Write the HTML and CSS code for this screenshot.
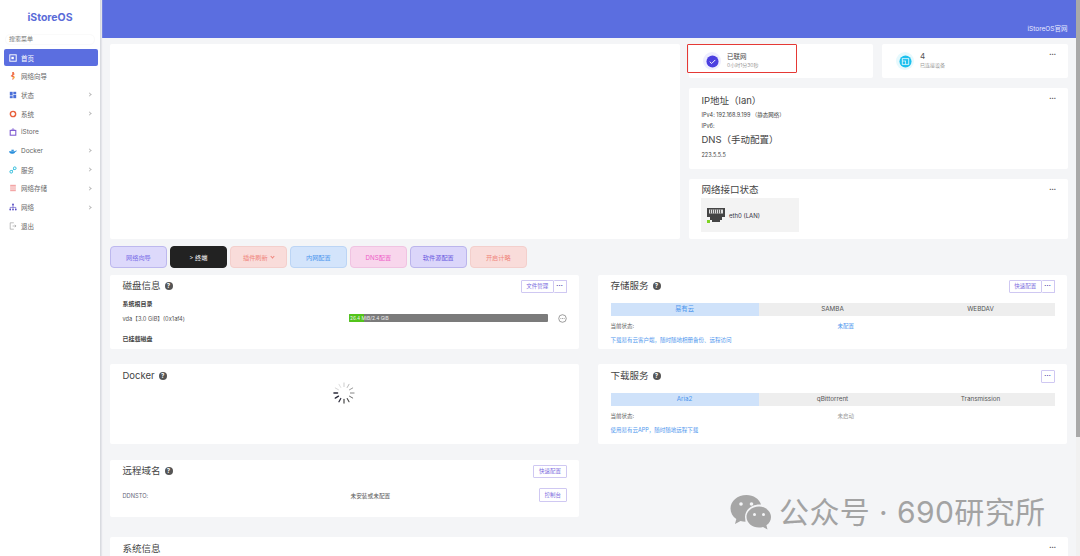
FILE: index.html
```html
<!DOCTYPE html>
<html lang="zh-CN">
<head>
<meta charset="utf-8">
<title>iStoreOS</title>
<link rel="stylesheet" href="styles.css">
</head>
<body>
<div class="app">
  <aside class="sidebar">
    <div class="logo">iStoreOS</div>
    <div class="search">搜索菜单</div>
    <nav class="menu">
      <a class="item active"><svg class="ic" viewBox="0 0 10 10"><rect x="1" y="1" width="8" height="8" fill="none" stroke="#fff" stroke-width="1.2"/><rect x="3" y="3.5" width="3" height="3" fill="#fff"/></svg><span>首页</span></a>
      <a class="item"><svg class="ic" viewBox="0 0 10 10"><path d="M4 0h2l1 3-2 1 2 2-2 4-1-1 1-2-3-2 2-2z" fill="#f0704a"/><circle cx="6" cy="7" r="1.2" fill="#f6b73c"/></svg><span>网络向导</span></a>
      <a class="item"><svg class="ic" viewBox="0 0 10 10"><rect x="1" y="1" width="3.6" height="4.6" fill="#4a6fd8"/><rect x="5.4" y="1" width="3.6" height="2.8" fill="#4a6fd8"/><rect x="1" y="6.4" width="3.6" height="2.6" fill="#4a6fd8"/><rect x="5.4" y="4.6" width="3.6" height="4.4" fill="#4a6fd8"/></svg><span>状态</span><i class="chev"></i></a>
      <a class="item"><svg class="ic" viewBox="0 0 10 10"><circle cx="5" cy="5" r="3.3" fill="none" stroke="#e8603c" stroke-width="1.8"/></svg><span>系统</span><i class="chev"></i></a>
      <a class="item"><svg class="ic" viewBox="0 0 10 10"><rect x="1.5" y="3" width="7" height="6" fill="none" stroke="#7a55d0" stroke-width="1.3"/><path d="M3.5 3a1.5 2 0 0 1 3 0" fill="none" stroke="#7a55d0"/></svg><span>iStore</span></a>
      <a class="item"><svg class="ic" viewBox="0 0 10 10"><path d="M0 5.4h7.6c.4-1 1.2-1.2 2.2-1-.3 1-1 1.6-2 1.8C7 8 5.4 8.5 3.5 8.5 1.5 8.5.3 7.2 0 5.4z" fill="#2a8fdc"/><rect x="3" y="3.4" width="3" height="1.5" fill="#2a8fdc"/></svg><span>Docker</span><i class="chev"></i></a>
      <a class="item"><svg class="ic" viewBox="0 0 10 10"><circle cx="2.8" cy="7.2" r="1.7" fill="none" stroke="#1fb6d8" stroke-width="1.1"/><circle cx="7.2" cy="2.8" r="1.7" fill="none" stroke="#1fb6d8" stroke-width="1.1"/><path d="M4 6l2-2" stroke="#1fb6d8"/></svg><span>服务</span><i class="chev"></i></a>
      <a class="item"><svg class="ic" viewBox="0 0 10 10"><rect x="1.5" y="1" width="7" height="8" fill="#f3a6a6"/><path d="M1.5 3.8h7M1.5 6.3h7" stroke="#fff"/></svg><span>网络存储</span><i class="chev"></i></a>
      <a class="item"><svg class="ic" viewBox="0 0 10 10"><path d="M5 2.5v3M1.5 8V5.5h7V8M5 5.5V8" fill="none" stroke="#5b4fc4" stroke-width=".8"/><circle cx="5" cy="1.8" r="1.2" fill="#5b4fc4"/><circle cx="1.5" cy="8.2" r="1.1" fill="#5b4fc4"/><circle cx="5" cy="8.2" r="1.1" fill="#5b4fc4"/><circle cx="8.5" cy="8.2" r="1.1" fill="#5b4fc4"/></svg><span>网络</span><i class="chev"></i></a>
      <a class="item"><svg class="ic" viewBox="0 0 10 10"><path d="M6 1H1.5v8H6M4.5 5h4.3M7.3 3.5l1.500 1.500-1.500 1.500" fill="none" stroke="#9a9a9a" stroke-width=".8"/></svg><span>退出</span></a>
    </nav>
  </aside>

  <div class="main">
    <header class="topbar"><span>iStoreOS官网</span></header>
    <div class="content">
      <section class="top">
        <div class="card blank"></div>
        <div class="side">
          <div class="stats">
            <div class="card stat first">
              <span class="halo violet"><svg viewBox="0 0 14 14" class="disc"><circle cx="7" cy="7" r="6.5" fill="#4b3fe0"/><path d="M4 7.2l2.1 2L10 5.3" fill="none" stroke="#fff" stroke-width="1"/></svg></span>
              <div class="stat-text"><b>已联网</b><small>0小时1分30秒</small></div>
            </div>
            <div class="card stat second">
              <span class="halo cyan"><svg viewBox="0 0 14 14" class="disc"><circle cx="7" cy="7" r="6.5" fill="#1cc0ee"/><rect x="3.5" y="4" width="7" height="6" fill="none" stroke="#fff" stroke-width=".8"/><path d="M3.5 6.5h4M7 6.5V10" stroke="#fff" stroke-width=".7"/></svg></span>
              <div class="stat-text"><b class="num">4</b><small>已连接设备</small></div>
              <span class="more">···</span>
            </div>
          </div>
          <div class="card ipcard">
            <span class="more">···</span>
            <h3>IP地址（lan）</h3>
            <p>IPv4: 192.168.9.199 （静态网络）</p>
            <p>IPv6:</p>
            <h3 class="dns">DNS（手动配置）</h3>
            <p class="dnsval">223.5.5.5</p>
          </div>
          <div class="card netcard">
            <span class="more">···</span>
            <h3>网络接口状态</h3>
            <div class="port">
              <svg class="rj" viewBox="0 0 18 15"><path d="M0 0h18v9h-3v3h-2v2H5v-2H3V9H0z" fill="#444"/><path d="M2 1.5h14v4H2z" fill="#ddd"/><path d="M3.5 1.5v4M5.5 1.5v4M7.5 1.5v4M9.5 1.5v4M11.5 1.5v4M13.5 1.5v4" stroke="#444" stroke-width=".8"/><rect x="0" y="12" width="3" height="3" fill="#7ed321"/></svg>
              <span>eth0 (LAN)</span>
            </div>
          </div>
        </div>
      </section>

      <div class="actions">
        <a class="act a1">网络向导</a>
        <a class="act a2">&gt; 终端</a>
        <a class="act a3">插件刷新<i class="caret"></i></a>
        <a class="act a4">内网配置</a>
        <a class="act a5">DNS配置</a>
        <a class="act a6">软件源配置</a>
        <a class="act a7">开启计略</a>
      </div>

      <div class="cols">
        <div class="col">
          <section class="card panel disk">
            <div class="phead"><h2>磁盘信息 <i class="q">?</i></h2><div class="btns"><a class="btn">文件管理</a><a class="btn dots">•••</a></div></div>
            <div class="label">系统根目录</div>
            <div class="diskrow">
              <span class="dname">vda【3.0 GiB】(0x1af4)</span>
              <div class="bar"><div class="fill"></div><span>26.4 MiB/2.4 GiB</span></div>
              <svg class="ellip" viewBox="0 0 10 10"><circle cx="5" cy="5" r="4.2" fill="none" stroke="#666" stroke-width=".7"/><path d="M2.8 5h.8M4.6 5h.8M6.4 5h.8" stroke="#555" stroke-width=".8"/></svg>
            </div>
            <div class="label mounted">已挂载磁盘</div>
          </section>
          <section class="card panel docker">
            <h2>Docker <i class="q">?</i></h2>
            <svg class="spin" viewBox="0 0 24 24">
              <g stroke-linecap="round" stroke-width="1">
                <path d="M12 1v4" stroke="#c8c8c8"/><path d="M17.5 2.5l-2 3.5" stroke="#b0b0b0"/><path d="M21.5 6.5L18 8.5" stroke="#909090"/><path d="M23 12h-4" stroke="#787878"/><path d="M21.5 17.5l-3.5-2" stroke="#606060"/><path d="M17.5 21.5l-2-3.5" stroke="#484848" stroke-width="1.2"/><path d="M12 23v-4" stroke="#383838" stroke-width="1.2"/><path d="M6.5 21.5l2-3.5" stroke="#303040" stroke-width="1.4"/><path d="M2.5 17.5l3.5-2" stroke="#282838" stroke-width="1.5"/><path d="M1 12h4" stroke="#282838" stroke-width="1.5"/><path d="M2.5 6.5L6 8.5" stroke="#d0d0d0"/><path d="M6.5 2.5l2 3.5" stroke="#dcdcdc"/>
              </g>
            </svg>
          </section>
          <section class="card panel remote">
            <div class="phead"><h2>远程域名 <i class="q">?</i></h2><div class="btns"><a class="btn">快速配置</a></div></div>
            <div class="rrow"><span class="rl">DDNSTO:</span><span class="rv">未安装或未配置</span><a class="btn tall">控制台</a></div>
          </section>
        </div>
        <div class="col">
          <section class="card panel store">
            <div class="phead"><h2>存储服务 <i class="q">?</i></h2><div class="btns"><a class="btn">快速配置</a><a class="btn dots">•••</a></div></div>
            <div class="tabs"><a class="on">易有云</a><a>SAMBA</a><a>WEBDAV</a></div>
            <div class="state"><span>当前状态:</span><span class="sv blue">未配置</span></div>
            <a class="link">下载易有云客户端，随时随地相册备份、远程访问</a>
          </section>
          <section class="card panel down">
            <div class="phead"><h2>下载服务 <i class="q">?</i></h2><div class="btns"><a class="btn dots solo">•••</a></div></div>
            <div class="tabs"><a class="on">Aria2</a><a>qBittorrent</a><a>Transmission</a></div>
            <div class="state"><span>当前状态:</span><span class="sv grey">未启动</span></div>
            <a class="link">使用易有云APP，随时随地远程下载</a>
          </section>
        </div>
      </div>

      <section class="card sysinfo"><h2>系统信息</h2><span class="more">···</span></section>
    </div>
  </div>
  <div class="scrollbar"><div class="thumb"></div></div>
</div>

<div class="callout"></div>
<div class="mark">
  <svg viewBox="0 0 42 36" class="wx"><path d="M17 1C8 1 1 7 1 14.5c0 4.200 2.200 8 5.800 10.500L5.500 30l5.500-3c1.600.5 3.300.7 5 .7C16 26 15.500 24.500 15.500 23c0-7 6.500-12.500 14.500-12.500h1.500C29.800 5 24 1 17 1z" fill="#a6a6a6"/><circle cx="11.5" cy="10" r="1.8" fill="#f4f5f7"/><circle cx="22" cy="10" r="1.8" fill="#f4f5f7"/><path d="M29.5 12.5c-6.900 0-12.500 4.700-12.500 10.500s5.600 10.500 12.500 10.500c1.400 0 2.800-.2 4-.6l4.500 2.600-1.100-4.200c2.800-1.900 4.600-4.900 4.600-8.300 0-5.800-5.600-10.500-12-10.500z" fill="#a6a6a6"/><circle cx="25" cy="20.5" r="1.5" fill="#f4f5f7"/><circle cx="34" cy="20.5" r="1.5" fill="#f4f5f7"/></svg>
  <span>公众号 · 690研究所</span>
</div>
</body>
</html>
```
FILE: styles.css
```css
* { box-sizing: border-box; }
html, body { margin: 0; height: 100%; overflow: hidden; }
body {
  position: relative;
  width: 1080px;
  height: 556px;
  background: #f4f5f7;
  color: #333;
  font-family: Inter, "Noto Sans CJK SC", "Liberation Sans", sans-serif;
  font-size: 6px;
}
a { text-decoration: none; color: inherit; }
h2, h3, p { margin: 0; font-weight: 400; }

.app { display: flex; height: 556px; overflow: hidden; }

/* sidebar */
.sidebar {
  flex: 0 0 101px;
  background: #fff;
  border-right: 1px solid #d9dbe0;
  box-shadow: 1px 0 1px #e4e5ea;
  display: flex;
  flex-direction: column;
  z-index: 1;
}
.logo {
  height: 34px;
  padding-top: 11px;
  text-align: center;
  color: #5a6cd8;
  font-size: 10.5px;
  line-height: 14px;
  font-weight: 700;
}
.search {
  height: 11px;
  margin: 0 5px 4px 5px;
  padding-left: 3px;
  border: 1px solid #fafafa;
  border-radius: 5px;
  line-height: 8px;
  font-size: 6px;
  color: #777;
}
.menu { display: flex; flex-direction: column; gap: 1.7px; padding: 0 2px 0 4px; }
.item {
  height: 17px;
  display: flex;
  align-items: center;
  padding: 0 6px 0 5px;
  gap: 4px;
  color: #666;
  font-size: 6.5px;
  border-radius: 2px;
}
.item.active { background: #5b6ee0; color: #fff; }
.ic { width: 8px; height: 8px; flex: none; }
.item span { flex: 1; }
.chev {
  width: 3px;
  height: 3px;
  border-top: .7px solid #bbb;
  border-right: .7px solid #bbb;
  transform: rotate(45deg);
  margin-right: 1px;
}

/* main */
.main { flex: 1; min-width: 0; display: flex; flex-direction: column; }
.topbar {
  flex: 0 0 38px;
  background: #5b6ee0;
  color: #e8ebff;
  font-size: 6.5px;
  display: flex;
  justify-content: flex-end;
  align-items: flex-end;
  padding: 0 8.5px 5px 0;
}
.content { padding: 6px 8px 0 9px; }
.scrollbar { flex: 0 0 4px; background: #f1f1f1; }
.thumb { height: 437px; background: #a9a9a9; }

.card { background: #fff; border-radius: 2px; }

/* top section */
.top { display: flex; gap: 9px; height: 195px; }
.blank { flex: 0 0 570px; }
.side { flex: 1; display: flex; flex-direction: column; gap: 10px; }
.stats { display: flex; gap: 9px; height: 34px; }
.stat { position: relative; display: flex; align-items: flex-start; padding: 8px 0 0 8px; gap: 6px; }
.first { flex: 0 0 184px; }
.second { flex: 1; padding-left: 14px; }
.halo { width: 18px; height: 18px; border-radius: 50%; display: flex; align-items: center; justify-content: center; flex: none; }
.violet { background: #eeeefe; margin-left: 6px; }
.cyan { background: #e6f9fd; }
.disc { width: 13px; height: 13px; }
.stat-text { display: flex; flex-direction: column; }
.stat-text b { font-weight: 400; font-size: 6.5px; line-height: 8px; color: #444; margin-top: 1px; }
.stat-text b.num { font-size: 8px; line-height: 9px; color: #555; margin-top: 0; }
.stat-text small { font-size: 5px; line-height: 8px; color: #999; }
.more { position: absolute; top: 6px; right: 12px; font-size: 8px; line-height: 9px; font-weight: 700; color: #444; letter-spacing: -.3px; }
.ipcard { position: relative; height: 81px; padding: 6px 12.5px; }
.ipcard h3, .netcard h3 { font-size: 9.5px; line-height: 14px; color: #444; }
.ipcard p { font-size: 5.5px; line-height: 11px; color: #444; }
.ipcard p:nth-of-type(1) { margin-top: 2px; }
.dns { margin-top: 1px; }
.ipcard .dnsval { margin-top: 3px; }
.netcard { position: relative; flex: 1; padding: 4px 12.5px; }
.port {
  width: 98px;
  height: 34px;
  margin: 1px 0 0 -.5px;
  background: #f3f3f3;
  display: flex;
  align-items: center;
  gap: 4px;
  padding-left: 6px;
  font-size: 6px;
  color: #334;
}
.rj { width: 18px; height: 15px; }

/* action buttons */
.actions { display: flex; gap: 3.2px; margin-top: 7px; height: 22px; }
.act {
  width: 56.8px;
  display: flex;
  align-items: center;
  justify-content: center;
  border: 1px solid;
  border-radius: 4px;
  font-size: 6.2px;
}
.caret {
  width: 3px;
  height: 3px;
  margin: -1px 0 0 3px;
  border-right: .7px solid #f0857c;
  border-bottom: .7px solid #f0857c;
  transform: rotate(45deg);
}
.a1 { background: #ddd9fb; border-color: #bdb8ee; color: #7a6ee8; }
.a2 { background: #222; border-color: #222; color: #fff; }
.a3 { background: #f9dcda; border-color: #f3cfcc; color: #f0857c; }
.a4 { background: #d3e4fb; border-color: #bcd5f5; color: #4c96ee; }
.a5 { background: #f8d6ec; border-color: #f0c3e2; color: #ee60c8; }
.a6 { background: #dbd6fa; border-color: #bbb5ec; color: #6a58e0; }
.a7 { background: #f9dcda; border-color: #f3cfcc; color: #f0857c; }

/* lower columns */
.cols { display: grid; grid-template-columns: 469px 469px; column-gap: 19px; margin-top: 7px; }
.col { display: flex; flex-direction: column; }
.panel { padding: 0 12.5px; position: relative; }
.phead { display: flex; justify-content: space-between; align-items: flex-start; padding-top: 5px; }
.panel h2 { font-size: 9.5px; line-height: 12px; color: #444; display: flex; align-items: center; gap: 4px; }
.q {
  width: 8px; height: 8px;
  border-radius: 50%;
  background: #555;
  color: #fff;
  font-size: 6px;
  line-height: 8px;
  font-style: normal;
  font-weight: 700;
  text-align: center;
}
.btns { display: flex; }
.btn {
  height: 13px;
  padding: 0 4.5px;
  border: 1px solid #cfc8f2;
  border-radius: 1px;
  color: #7d6ee0;
  background: #fff;
  font-size: 5.5px;
  line-height: 11px;
}
.btn.dots { border-left: 0; padding: 0 2.5px; font-size: 3.5px; letter-spacing: .3px; color: #4a3fa8; }
.btn.solo { border-left: 1px solid #cfc8f2; }
.btn.tall { height: 14px; line-height: 12px; }

.disk { height: 74px; margin-bottom: 15px; }
.label { font-size: 6px; font-weight: 700; line-height: 8px; color: #444; margin-top: 7px; }
.diskrow { display: flex; align-items: center; height: 10px; margin-top: 5px; }
.dname { width: 227px; font-size: 5.7px; color: #555; }
.bar {
  position: relative;
  width: 199px;
  height: 8px;
  background: #7b7b7b;
  border-radius: 1px;
  overflow: hidden;
  color: #f0f0f0;
  font-size: 4.8px;
  line-height: 8px;
}
.fill { width: 7.5%; height: 100%; background: #52c41a; }
.bar span { position: absolute; left: 1px; top: 0; white-space: nowrap; }
.ellip { width: 9px; height: 9px; margin-left: 10px; }
.label.mounted { margin-top: 12px; }

.docker { height: 80px; margin-bottom: 16px; padding-top: 6px; }
.spin { position: absolute; left: 223px; top: 18px; width: 22px; height: 22px; }

.remote { height: 57px; margin-bottom: 20px; }
.rrow { display: flex; align-items: center; justify-content: space-between; position: relative; margin-top: 10px; height: 14px; font-size: 5.7px; color: #667; }
.rv { position: absolute; left: 228px; color: #555; }
.rrow .btn { position: relative; }

.store { height: 74px; margin-bottom: 15px; }
.down { height: 80px; padding-top: 1px; }
.tabs { display: flex; height: 13px; margin-top: 10px; background: #eee; font-size: 6.3px; color: #555; }
.tabs a { flex: 1; text-align: center; line-height: 13px; }
.tabs .on { background: #cfe2fa; color: #4c96ee; }
.state { display: flex; font-size: 5.5px; line-height: 8px; margin-top: 6px; color: #666; }
.state > span:first-child { width: 227px; }
.sv.blue { color: #4c96ee; }
.sv.grey { color: #999; }
.link { display: block; margin-top: 6px; font-size: 5.5px; line-height: 8px; color: #4c96ee; }

.sysinfo { position: relative; height: 40px; padding: 5px 12.5px; }
.sysinfo h2 { font-size: 9.5px; line-height: 14px; color: #444; }

/* overlays */
.callout {
  position: absolute;
  left: 687px;
  top: 44px;
  width: 110px;
  height: 29px;
  border: 1.5px solid #e53935;
  border-radius: 1px;
}
.mark {
  position: absolute;
  left: 729px;
  top: 493px;
  display: flex;
  align-items: center;
  gap: 7px;
  color: #a3a3a3;
  font-size: 30px;
  letter-spacing: .4px;
  line-height: 38px;
  white-space: nowrap;
}
.wx { width: 43px; height: 36px; }
```
